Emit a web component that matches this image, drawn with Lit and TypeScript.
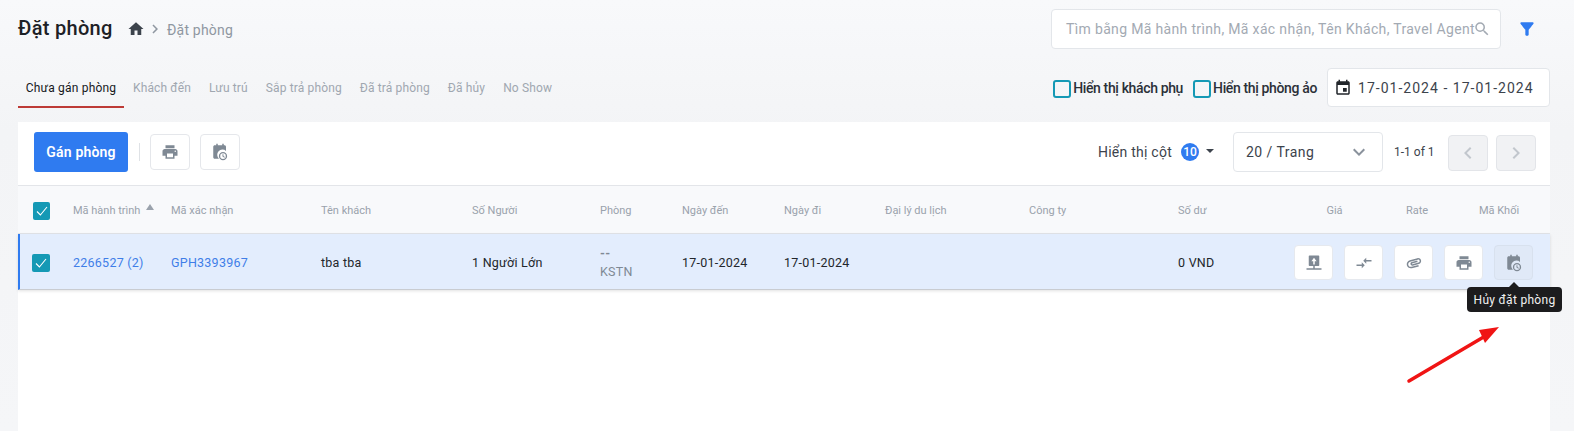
import { LitElement, html, css, svg } from "lit";
import { customElement } from "lit/decorators.js";

const P = {
  home: "M10 20v-6h4v6h5v-8h3L12 3 2 12h3v8z",
  chev: "M8.59 16.59 13.17 12 8.59 7.41 10 6l6 6-6 6z",
  chevL: "M15.41 16.59 10.83 12l4.58-4.59L14 6l-6 6 6 6z",
  down: "M7.41 8.59 12 13.17l4.59-4.58L18 10l-6 6-6-6z",
  search:
    "M15.5 14h-.79l-.28-.27A6.47 6.47 0 0 0 16 9.5 6.5 6.5 0 1 0 9.5 16c1.61 0 3.09-.59 4.23-1.57l.27.28v.79l5 4.99L20.49 19l-4.99-5zm-6 0C7.01 14 5 11.99 5 9.5S7.01 5 9.5 5 14 7.01 14 9.5 11.99 14 9.5 14z",
  filter:
    "M4.25 5.61C6.27 8.2 10 13 10 13v6c0 .55.45 1 1 1h2c.55 0 1-.45 1-1v-6s3.72-4.8 5.74-7.39c.51-.66.04-1.61-.79-1.61H5.04c-.83 0-1.3.95-.79 1.61z",
  event:
    "M17 12h-5v5h5v-5zM16 1v2H8V1H6v2H5c-1.11 0-1.99.9-1.99 2L3 19c0 1.1.89 2 2 2h14c1.1 0 2-.9 2-2V5c0-1.1-.9-2-2-2h-1V1h-2zm3 18H5V8h14v11z",
  print:
    "M19 8H5c-1.66 0-3 1.34-3 3v6h4v4h12v-4h4v-6c0-1.66-1.34-3-3-3zm-3 11H8v-5h8v5zm3-7c-.55 0-1-.45-1-1s.45-1 1-1 1 .45 1 1-.45 1-1 1zm-1-9H6v4h12V3z",
  swap: "M9.01 14H2v2h7.01v3L13 15l-3.99-4zm5.98-1v-3H22V8h-7.01V5L11 9z",
  clip: "M2 12.5C2 9.46 4.46 7 7.5 7H18c2.21 0 4 1.79 4 4s-1.79 4-4 4H9.5C8.12 15 7 13.88 7 12.5S8.12 10 9.5 10H17v2H9.41c-.55 0-.55 1 0 1H18c1.1 0 2-.9 2-2s-.9-2-2-2H7.5C5.57 9 4 10.57 4 12.5S5.57 16 7.5 16H17v2H7.5C4.46 18 2 15.54 2 12.5z",
  net: "M6 2h12a1 1 0 0 1 1 1v12a1 1 0 0 1-1 1h-5v3h9v2H2v-2h9v-3H6a1 1 0 0 1-1-1V3a1 1 0 0 1 1-1zm6 3L8.5 9.5H11V14h2V9.5h2.5z",
  calClock:
    "M7 1h2v2h6V1h2v2h1c1.1 0 2 .9 2 2v5.6A7 7 0 0 0 10.6 21H5c-1.1 0-2-.9-2-2V5c0-1.1.9-2 2-2h2zm9 11a5.5 5.5 0 1 1 0 11 5.5 5.5 0 0 1 0-11zm0 1.8a3.7 3.7 0 1 0 0 7.4 3.7 3.7 0 0 0 0-7.4zm-.7 1.2h1.3v2.4l1.9 1.1-.6 1.1-2.6-1.5z",
};

const icon = (d: string, size = 20) =>
  html`<svg width=${size} height=${size} viewBox="0 0 24 24" fill="currentColor">${svg`<path fill-rule="evenodd" d=${d}></path>`}</svg>`;

const check = html`<svg width="14" height="14" viewBox="0 0 14 14" fill="none" stroke="#fff" stroke-width="1.1"><path d="M2 7.5 5.4 11 12 3"></path></svg>`;

const HEAD = [
  "Mã hành trình",
  "Mã xác nhận",
  "Tên khách",
  "Số Người",
  "Phòng",
  "Ngày đến",
  "Ngày đi",
  "Đại lý du lịch",
  "Công ty",
  "Số dư",
];
const TABS = ["Chưa gán phòng", "Khách đến", "Lưu trú", "Sắp trả phòng", "Đã trả phòng", "Đã hủy", "No Show"];

@customElement("app-root")
export class AppRoot extends LitElement {
  static styles = css`
    :host {
      display: block;
      position: relative;
      height: 431px;
      overflow: hidden;
      background: linear-gradient(#f8f9fb, #f3f4f6 130px, #f5f6f8);
      font-family: Roboto, "Noto Sans", sans-serif;
      color: #22262b;
      box-sizing: border-box;
      padding: 0 24px 0 18px;
    }
    svg {
      flex: none;
      display: block;
    }
    .top {
      display: flex;
      align-items: center;
      height: 57px;
    }
    h1 {
      margin: 0;
      padding-bottom: 2px;
      font-size: 20px;
      font-weight: 500;
      width: 109px;
      color: #1d2126;
      letter-spacing: 0.3px;
      white-space: nowrap;
    }
    .crumb {
      display: flex;
      align-items: center;
      color: #8f97a1;
      font-size: 14px;
      letter-spacing: 0.2px;
    }
    .crumb .h {
      color: #3c434c;
    }
    .crumb .c {
      color: #8f97a1;
      margin: 0 3px 0 1px;
    }
    .crumb .t {
      margin-top: 2px;
    }
    .search {
      margin-left: auto;
      width: 450px;
      height: 40px;
      box-sizing: border-box;
      background: #fff;
      border: 1px solid #e3e6ea;
      border-radius: 4px;
      display: flex;
      align-items: center;
      padding: 0 0 0 14px;
      color: #a3aab3;
      font-size: 14px;
      letter-spacing: 0.34px;
      white-space: nowrap;
    }
    .search svg {
      margin-left: -2px;
    }
    .filter {
      color: #2f7bf0;
      margin: 0 13px 0 16px;
      display: flex;
    }
    .bar {
      display: flex;
      align-items: center;
      height: 65px;
      padding-bottom: 4px;
      box-sizing: border-box;
    }
    .tabs {
      display: flex;
      height: 38px;
      margin-top: 3px;
    }
    .tab {
      font-size: 12px;
      color: #a0a7b0;
      padding: 0 9px 2px;
      display: flex;
      align-items: center;
      letter-spacing: 0.14px;
      white-space: nowrap;
      box-sizing: border-box;
      height: 38px;
    }
    .tab.on {
      color: #15181c;
      border-bottom: 2px solid #bd3a36;
      padding: 0 8px;
      width: 106px;
      justify-content: center;
      letter-spacing: 0.2px;
    }
    .right {
      margin-left: auto;
      display: flex;
      align-items: center;
      font-size: 14px;
      color: #2b3038;
    }
    .cb {
      width: 18px;
      height: 18px;
      box-sizing: border-box;
      border: 2px solid #1599b5;
      border-radius: 3px;
      margin: 2px 2px 0 0;
    }
    .lab {
      white-space: nowrap;
      margin-right: 10px;
      font-weight: 500;
      letter-spacing: -0.36px;
    }
    .date {
      width: 223px;
      height: 39px;
      box-sizing: border-box;
      background: #fff;
      border: 1px solid #e3e6ea;
      border-radius: 4px;
      display: flex;
      align-items: center;
      padding-left: 6px;
      gap: 6px;
      font-size: 14px;
      letter-spacing: 1.02px;
      color: #3c434c;
      white-space: nowrap;
    }
    .date svg {
      color: #22262b;
    }
    .card {
      background: #fff;
      height: 309px;
    }
    .tools {
      display: flex;
      align-items: center;
      height: 63px;
      box-sizing: border-box;
      padding: 0 14px 3px 16px;
    }
    .primary {
      width: 94px;
      height: 40px;
      background: #2f7bf0;
      border-radius: 3px;
      color: #fff;
      font-size: 14px;
      font-weight: 600;
      display: flex;
      align-items: center;
      justify-content: center;
      letter-spacing: 0.2px;
    }
    .sep {
      width: 1px;
      height: 18px;
      background: #dfe2e6;
      margin: 0 10px 0 11px;
    }
    .ib {
      width: 40px;
      height: 36px;
      box-sizing: border-box;
      background: #fff;
      border: 1px solid #e5e7eb;
      border-radius: 4px;
      display: flex;
      align-items: center;
      justify-content: center;
      color: #7f8994;
    }
    .tools .ib + .ib {
      margin-left: 10px;
    }
    .cols {
      margin-left: auto;
      display: flex;
      align-items: center;
      font-size: 14px;
      color: #3c434c;
      letter-spacing: 0.25px;
    }
    .badge {
      width: 18px;
      height: 18px;
      border-radius: 50%;
      background: #2f7bf0;
      color: #fff;
      font-size: 12px;
      font-weight: 500;
      display: flex;
      align-items: center;
      justify-content: center;
      margin: 0 7px 0 9px;
      letter-spacing: 0;
    }
    .caret {
      width: 0;
      height: 0;
      border: 4px solid transparent;
      border-top: 4px solid #3c434c;
      border-bottom: 0;
      margin: 0 19px 2px 0;
    }
    .sel {
      width: 150px;
      height: 40px;
      box-sizing: border-box;
      border: 1px solid #e3e6ea;
      border-radius: 4px;
      display: flex;
      align-items: center;
      justify-content: space-between;
      padding: 0 11px 0 12px;
      font-size: 14px;
      color: #3c434c;
      letter-spacing: 0.45px;
    }
    .sel svg {
      color: #8a929c;
    }
    .pg {
      font-size: 12px;
      color: #3c434c;
      margin: 0 11px;
      width: 43px;
      white-space: nowrap;
    }
    .nav {
      width: 40px;
      height: 36px;
      box-sizing: border-box;
      background: #f1f2f4;
      border: 1px solid #e3e5e9;
      border-radius: 4px;
      display: flex;
      align-items: center;
      justify-content: center;
      color: #c2c7cd;
      margin-top: 2px;
    }
    .nav + .nav {
      margin-left: 8px;
    }
    .grid {
      display: grid;
      grid-template-columns: 55px 98px 150px 151px 128px 82px 102px 101px 144px 149px 100px 1fr;
      align-items: center;
    }
    .thead {
      height: 49px;
      box-sizing: border-box;
      padding-top: 2px;
      background: #f8f9fb;
      border-top: 1px solid #e3e5e9;
      border-bottom: 1px solid #e3e5e9;
      font-size: 11px;
      color: #9aa2ac;
      white-space: nowrap;
    }
    .cbcell {
      padding-left: 15px;
    }
    .tick {
      width: 17px;
      height: 18px;
      border-radius: 2px;
      background: #1599b5;
      display: flex;
      align-items: center;
      justify-content: center;
    }
    .sort {
      display: inline-block;
      width: 0;
      height: 0;
      border: 4px solid transparent;
      border-bottom: 6px solid #9aa2ac;
      border-top: 0;
      margin-left: 6px;
      vertical-align: 4px;
    }
    .tail {
      display: grid;
      grid-template-columns: 83px 82px 82px;
      justify-content: end;
      padding-right: 10px;
      text-align: center;
    }
    .row {
      height: 56px;
      box-sizing: border-box;
      padding-top: 2px;
      background: #e3edfd;
      border-left: 2px solid #2f7bf0;
      border-bottom: 1px solid #c9ccd1;
      box-shadow: 0 1px 3px rgba(0, 0, 0, 0.12);
      font-size: 12.5px;
      color: #22262b;
      letter-spacing: 0.25px;
      white-space: nowrap;
    }
    .row .cbcell {
      padding-left: 14px;
    }
    .row .tick {
      width: 18px;
    }
    .row a {
      color: #3f7ee8;
    }
    .phong {
      display: flex;
      flex-direction: column;
      gap: 4px;
      color: #7f8994;
      line-height: 14px;
    }
    .phong b {
      font-weight: 700;
    }
    .cell {
      margin-left: -2px;
    }
    .acts {
      display: flex;
      justify-content: flex-end;
      gap: 11px;
      padding-right: 17px;
    }
    .acts .ib {
      width: 39px;
      height: 35px;
      border: 1px solid #e6e9ee;
    }
    .acts .ib.hov {
      background: #e0e9f7;
      border-color: #d8e1ee;
    }
    .clip {
      transform: rotate(-15deg);
    }
    .tip {
      position: absolute;
      left: 1467px;
      top: 287px;
      width: 95px;
      height: 25px;
      background: #1c1c1e;
      border-radius: 4px;
      color: #f1f1f1;
      font-size: 12px;
      display: flex;
      align-items: center;
      justify-content: center;
      letter-spacing: 0.3px;
      white-space: nowrap;
    }
    .tip::before {
      content: "";
      position: absolute;
      left: 42px;
      top: -5px;
      border: 5px solid transparent;
      border-bottom: 5px solid #1c1c1e;
      border-top: 0;
    }
    .arrow {
      position: absolute;
      left: 1400px;
      top: 320px;
    }
  `;

  render() {
    return html`
      <div class="top">
        <h1>Đặt phòng</h1>
        <div class="crumb">
          <span class="h">${icon(P.home, 18)}</span>
          <span class="c">${icon(P.chev, 18)}</span>
          <span class="t">Đặt phòng</span>
        </div>
        <div class="search">
          <span>Tìm bằng Mã hành trình, Mã xác nhận, Tên Khách, Travel Agent</span>
          ${icon(P.search, 18)}
        </div>
        <div class="filter">${icon(P.filter, 20)}</div>
      </div>
      <div class="bar">
        <div class="tabs">
          ${TABS.map((t, i) => html`<div class="tab ${i === 0 ? "on" : ""}">${t}</div>`)}
        </div>
        <div class="right">
          <div class="cb"></div>
          <div class="lab">Hiển thị khách phụ</div>
          <div class="cb"></div>
          <div class="lab">Hiển thị phòng ảo</div>
          <div class="date">${icon(P.event, 18)}17-01-2024 - 17-01-2024</div>
        </div>
      </div>
      <div class="card">
        <div class="tools">
          <div class="primary">Gán phòng</div>
          <div class="sep"></div>
          <div class="ib">${icon(P.print, 18)}</div>
          <div class="ib">${icon(P.calClock, 18)}</div>
          <div class="cols">
            Hiển thị cột
            <span class="badge">10</span>
            <span class="caret"></span>
          </div>
          <div class="sel">20 / Trang ${icon(P.down, 24)}</div>
          <div class="pg">1-1 of 1</div>
          <div class="nav">${icon(P.chevL, 24)}</div>
          <div class="nav">${icon(P.chev, 24)}</div>
        </div>
        <div class="grid thead">
          <div class="cbcell"><div class="tick">${check}</div></div>
          ${HEAD.map((h, i) => html`<div>${h}${i === 0 ? html`<span class="sort"></span>` : ""}</div>`)}
          <div class="tail"><div>Giá</div><div>Rate</div><div>Mã Khối</div></div>
        </div>
        <div class="grid row">
          <div class="cbcell cell"><div class="tick">${check}</div></div>
          <div class="cell"><a>2266527 (2)</a></div>
          <div class="cell"><a>GPH3393967</a></div>
          <div class="cell">tba tba</div>
          <div class="cell">1 Người Lớn</div>
          <div class="cell phong"><b>--</b><span>KSTN</span></div>
          <div class="cell">17-01-2024</div>
          <div class="cell">17-01-2024</div>
          <div></div>
          <div></div>
          <div class="cell">0 VND</div>
          <div class="acts">
            <div class="ib">${icon(P.net, 18)}</div>
            <div class="ib">${icon(P.swap, 18)}</div>
            <div class="ib"><span class="clip">${icon(P.clip, 18)}</span></div>
            <div class="ib">${icon(P.print, 18)}</div>
            <div class="ib hov">${icon(P.calClock, 18)}</div>
          </div>
        </div>
      </div>
      <div class="tip">Hủy đặt phòng</div>
      <svg class="arrow" width="110" height="70" viewBox="0 0 110 70">
        <path d="M9 61 L87 15" stroke="#f01414" stroke-width="3.5" stroke-linecap="round" fill="none"></path>
        <path d="M99 7 L79 10 L85 23 z" fill="#f01414"></path>
      </svg>
    `;
  }
}
